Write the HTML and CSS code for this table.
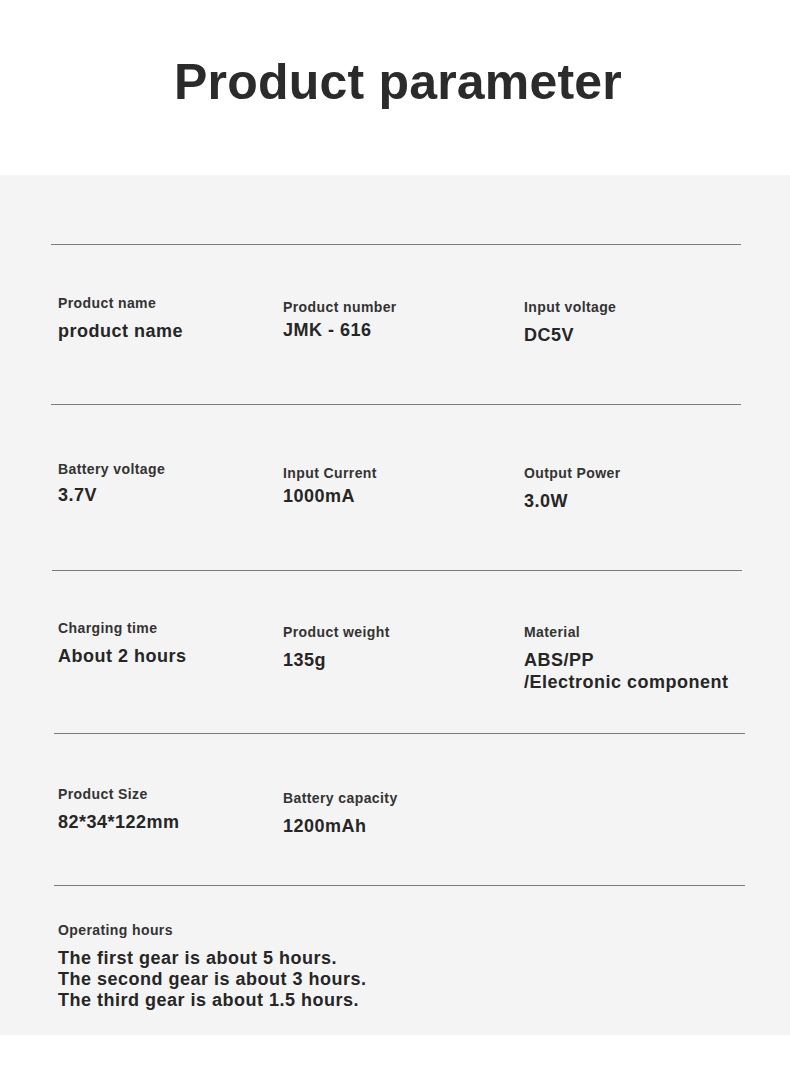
FILE: index.html
```html
<!DOCTYPE html>
<html lang="en">
<head>
<meta charset="utf-8">
<title>Product parameter</title>
<link rel="stylesheet" href="styles.css">
</head>
<body>
<header class="head">
  <h1 class="title">Product parameter</h1>
</header>
<main class="panel">
  <section class="row row-1">
    <div class="cell"><div class="label">Product name</div><div class="value">product name</div></div>
    <div class="cell shift"><div class="label">Product number</div><div class="value tight">JMK - 616</div></div>
    <div class="cell shift"><div class="label">Input voltage</div><div class="value">DC5V</div></div>
  </section>
  <section class="row row-2">
    <div class="cell"><div class="label">Battery voltage</div><div class="value mid">3.7V</div></div>
    <div class="cell shift"><div class="label">Input Current</div><div class="value tight">1000mA</div></div>
    <div class="cell shift"><div class="label">Output Power</div><div class="value">3.0W</div></div>
  </section>
  <section class="row row-3">
    <div class="cell"><div class="label">Charging time</div><div class="value">About 2 hours</div></div>
    <div class="cell shift"><div class="label">Product weight</div><div class="value">135g</div></div>
    <div class="cell shift"><div class="label">Material</div><div class="value">ABS/PP<br>/Electronic component</div></div>
  </section>
  <section class="row row-4">
    <div class="cell"><div class="label">Product Size</div><div class="value">82*34*122mm</div></div>
    <div class="cell shift"><div class="label">Battery capacity</div><div class="value">1200mAh</div></div>
    <div class="cell"></div>
  </section>
  <section class="row row-5">
    <div class="cell wide"><div class="label">Operating hours</div><div class="value lines">The first gear is about 5 hours.<br>The second gear is about 3 hours.<br>The third gear is about 1.5 hours.</div></div>
  </section>
</main>
</body>
</html>
```

FILE: styles.css
```css
* { box-sizing: border-box; }
html, body { margin: 0; padding: 0; background: #ffffff; }
body {
  font-family: "Liberation Sans", Arial, Helvetica, sans-serif;
  color: #2a2a2a;
  width: 790px;
}
.head {
  height: 175px;
  display: flex;
  align-items: flex-start;
  justify-content: center;
  padding-top: 52px;
}
.title {
  margin: 0 0 0 6px;
  font-size: 50px;
  line-height: 60px;
  font-weight: 700;
  letter-spacing: 0.2px;
  color: #2b2b2b;
}
.panel {
  background: #f4f4f4;
  padding-top: 69px;
  height: 860px;
}
.row {
  border-top: 1px solid #7c7c7c;
  margin: 0 49px 0 51px;
  padding-left: 7px;
  display: grid;
  grid-template-columns: 225px 241px 1fr;
  align-items: start;
}
.row-1 { height: 160px; padding-top: 50px; }
.row-2 { height: 166px; padding-top: 56px; }
.row-3 { height: 163px; padding-top: 49px; margin-left: 52px; margin-right: 48px; padding-left: 6px; }
.row-4 { height: 152px; padding-top: 52px; margin-left: 54px; margin-right: 45px; padding-left: 4px; }
.row-5 { height: 150px; padding-top: 36px; margin-left: 54px; margin-right: 45px; padding-left: 4px; grid-template-columns: 1fr; }
.shift { margin-top: 4px; }
.label {
  font-size: 14px;
  line-height: 17px;
  font-weight: 700;
  letter-spacing: 0.4px;
  color: #333333;
}
.value {
  margin-top: 8px;
  font-size: 18px;
  line-height: 22px;
  font-weight: 700;
  letter-spacing: 0.5px;
  color: #262626;
}
.value.tight { margin-top: 3px; }
.value.mid { margin-top: 6px; }
.value.lines { margin-top: 9px; line-height: 21px; }
```
